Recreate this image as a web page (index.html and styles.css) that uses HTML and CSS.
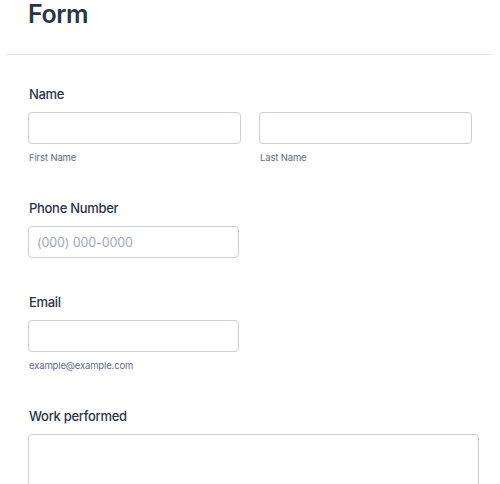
FILE: index.html
```html
<!DOCTYPE html>
<html lang="en">
<head>
    <meta charset="UTF-8">
    <meta name="viewport" content="width=device-width, initial-scale=1.0">
    <title>Form</title>
    <link rel="stylesheet" href="styles.css">
</head>
<body>

<div class="form-header">
    <h1>Form</h1>
</div>
<hr class="divider">

<form class="form-body">

    <!-- Nome -->
    <div class="campo">
        <label class="rotulo" for="first">Name</label>
        <div class="linha-dupla">
            <div class="sub">
                <input type="text" id="first" class="entrada">
                <span class="sub-rotulo">First Name</span>
            </div>
            <div class="sub">
                <input type="text" id="last" class="entrada">
                <span class="sub-rotulo">Last Name</span>
            </div>
        </div>
    </div>

    <!-- Telefone -->
    <div class="campo">
        <label class="rotulo" for="phone">Phone Number</label>
        <input type="text" id="phone" class="entrada curta" placeholder="(000) 000-0000">
    </div>

    <!-- Email -->
    <div class="campo">
        <label class="rotulo" for="email">Email</label>
        <input type="text" id="email" class="entrada curta">
        <span class="sub-rotulo">example@example.com</span>
    </div>

    <!-- Trabalho -->
    <div class="campo">
        <label class="rotulo" for="work">Work performed</label>
        <textarea id="work" class="area"></textarea>
    </div>

</form>

</body>
</html>
```

FILE: styles.css
```css
body {
    font-family: 'Inter', 'Liberation Sans', sans-serif;
    background-color: #fff;
    color: #2c3345;
    margin: 0;
    padding: 0;
    overflow: hidden;
}

.form-header {
    padding: 0 28px;
}

.form-header h1 {
    margin: 0;
    font-size: 25px;
    line-height: 29px;
    font-weight: 600;
    letter-spacing: -0.4px;
    color: #2c3345;
}

.divider {
    border: none;
    border-top: 1px solid #e3e5ee;
    margin: 25px 6px 0 6px;
}

.form-body {
    padding: 12px 21px 0 28px;
}

.campo {
    display: flex;
    flex-direction: column;
    align-items: flex-start;
    padding: 17px 0;
}

.rotulo {
    font-size: 13px;
    line-height: 20px;
    font-weight: 500;
    letter-spacing: -0.3px;
    color: #2c3345;
    margin-bottom: 8px;
    padding-left: 1px;
}

.linha-dupla {
    display: flex;
    gap: 18px;
}

.sub {
    display: flex;
    flex-direction: column;
    width: 213px;
}

.entrada {
    width: 213px;
    height: 32px;
    box-sizing: border-box;
    border: 1px solid #c8cedb;
    border-radius: 4px;
    padding: 0 8px;
    font-family: inherit;
    font-size: 12.5px;
    letter-spacing: -0.1px;
    color: #2c3345;
    background: #fff;
}

.entrada.curta {
    width: 211px;
}

.entrada::placeholder {
    color: #a0a8b9;
}

.sub-rotulo {
    font-size: 9.5px;
    line-height: 13px;
    letter-spacing: -0.15px;
    color: #5f6b84;
    margin-top: 7px;
    padding-left: 1px;
}

.area {
    width: 451px;
    height: 160px;
    box-sizing: border-box;
    border: 1px solid #c8cedb;
    border-radius: 4px;
    font-family: inherit;
    resize: none;
}
```
